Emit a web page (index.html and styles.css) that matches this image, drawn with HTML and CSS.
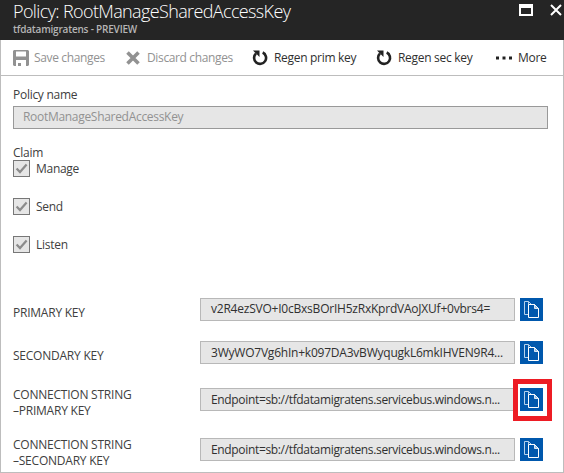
FILE: index.html
```html
<!DOCTYPE html>
<html lang="en">
<head>
<meta charset="utf-8">
<title>Policy: RootManageSharedAccessKey</title>
<link rel="stylesheet" href="styles.css">
</head>
<body>
<svg class="defs" width="0" height="0">
  <symbol id="check" viewBox="0 0 15 15"><path d="M2.6 7.4 6 11 12.6 3.6" fill="none" stroke="#8c8c8c" stroke-width="2.2"/></symbol>
  <symbol id="reload" viewBox="0 0 16 16"><path d="M4 3.5A6 6 0 1 0 10.7 2.5" fill="none" stroke="#222" stroke-width="2.6"/><path d="M1 .5h6.500V7L5.300 4.800 3.200 2.700Z" fill="#222"/></symbol>
  <symbol id="copy" viewBox="0 0 23 23"><path d="M4.500 3.500h4l3 3v10h-7z" fill="#0058ad" stroke="#b5d2ec"/><path d="M8.500 3.500v3h3" fill="none" stroke="#b5d2ec"/><path d="M8.500 6.500h6l4 4v9h-10z" fill="#0058ad" stroke="#fff"/><path d="M14.500 6.500l4 4h-4z" fill="#9dc3e6" stroke="#fff" stroke-width=".8"/></symbol>
</svg>
<header class="header">
  <div>
    <h1 class="title">Policy: RootManageSharedAccessKey</h1>
    <p class="subtitle">tfdatamigratens - PREVIEW</p>
  </div>
  <div class="window-actions">
    <svg width="14" height="12"><path d="M0 0h14v12H0zM2 4v6h10V4z" fill="#fff" fill-rule="evenodd"/></svg>
    <svg width="12" height="12"><path d="M1 1l10 10M11 1 1 11" stroke="#fff" stroke-width="2"/></svg>
  </div>
</header>
<main class="panel">
  <nav class="toolbar">
    <button class="tool save" disabled><svg width="16" height="16"><path d="M1 0h14l1 1v14l-1 1H1l-1-1V1zM3 1.500v5h10v-5zM3 10v6h2v-3h3v3h5v-6z" fill="#929292" fill-rule="evenodd"/></svg><span>Save changes</span></button>
    <button class="tool discard" disabled><svg width="14" height="14"><path d="M1.500 1.500l11 11M12.500 1.500l-11 11" stroke="#929292" stroke-width="3.600"/></svg><span>Discard changes</span></button>
    <button class="tool prim"><svg width="16" height="16"><use href="#reload"/></svg><span>Regen prim key</span></button>
    <button class="tool sec"><svg width="16" height="16"><use href="#reload"/></svg><span>Regen sec key</span></button>
    <button class="tool more"><svg width="17" height="4"><path d="M0 .5h3v3H0zM6.500.5h3v3h-3zM13 .5h3v3h-3z" fill="#222"/></svg><span>More</span></button>
  </nav>
  <section class="policy">
    <div class="policy-label">Policy name</div>
    <div class="policy-input">RootManageSharedAccessKey</div>
    <div class="claim-label">Claim</div>
    <div class="claims">
      <div class="claim"><span class="box"><svg width="15" height="15"><use href="#check"/></svg></span><span>Manage</span></div>
      <div class="claim"><span class="box"><svg width="15" height="15"><use href="#check"/></svg></span><span>Send</span></div>
      <div class="claim"><span class="box"><svg width="15" height="15"><use href="#check"/></svg></span><span>Listen</span></div>
    </div>
  </section>
  <section class="keys">
    <div class="row primary"><div class="key-label">PRIMARY KEY</div><div class="value">v2R4ezSVO+I0cBxsBOrIH5zRxKprdVAoJXUf+0vbrs4=</div><button class="copy"><svg width="23" height="23"><use href="#copy"/></svg></button></div>
    <div class="row secondary"><div class="key-label">SECONDARY KEY</div><div class="value">3WyWO7Vg6hIn+k097DA3vBWyqugkL6mkIHVEN9R4...</div><button class="copy"><svg width="23" height="23"><use href="#copy"/></svg></button></div>
    <div class="row conn-primary"><div class="key-label">CONNECTION STRING<br>–PRIMARY KEY</div><div class="value endpoint">Endpoint=sb://tfdatamigratens.servicebus.windows.n...</div><button class="copy highlighted"><svg width="23" height="23"><use href="#copy"/></svg></button></div>
    <div class="row conn-secondary"><div class="key-label">CONNECTION STRING<br>–SECONDARY KEY</div><div class="value endpoint">Endpoint=sb://tfdatamigratens.servicebus.windows.n...</div><button class="copy"><svg width="23" height="23"><use href="#copy"/></svg></button></div>
  </section>
</main>
</body>
</html>
```
FILE: styles.css
```css
*, *::after { box-sizing: border-box; }
body { margin: 0; width: 564px; height: 473px; overflow: hidden; background: #fff; color: #404040; font: 12px/16px "Open Sans", "Noto Sans", sans-serif; }
svg { display: block; flex: none; }
.defs { display: none; }
.header { height: 40px; padding: 0 2px 0 13px; background: #252525; display: flex; justify-content: space-between; color: #fff; }
.title { margin: 0; height: 22px; font-size: 18px; line-height: 22px; font-weight: 300; white-space: nowrap; letter-spacing: -.63px; }
.subtitle { margin: 0; font-size: 10px; line-height: 14px; font-weight: 600; color: #b5b5b5; letter-spacing: -.2px; }
.window-actions { display: flex; gap: 17px; padding-top: 4px; }
.panel { height: 433px; border: 1px solid #bdbdbd; border-top: 0; }
.toolbar { height: 36px; border-bottom: 1px solid #bdbdbd; display: flex; align-items: center; padding-left: 12px; }
.tool { display: flex; align-items: center; flex: none; gap: 5px; padding: 0; border: 0; background: none; font: inherit; color: #303030; white-space: nowrap; letter-spacing: -.3px; }
.tool:disabled { color: #929292; letter-spacing: -.36px; }
.save { width: 113px; }
.discard { width: 126px; gap: 7px; }
.prim { width: 124px; gap: 6px; }
.sec { width: 120px; gap: 6px; }
.policy { padding: 11px 15px 0 12px; letter-spacing: -.28px; }
.policy-label { height: 19px; }
.policy-input { height: 23px; border: 1px solid #999; background: #e6e6e6; color: #929292; padding: 1px 9px; line-height: 18px; letter-spacing: -.3px; }
.claim-label { margin-top: 16px; height: 15px; line-height: 15px; }
.claims { display: flex; flex-direction: column; gap: 21px; }
.claim { display: flex; height: 17px; line-height: 17px; gap: 6px; }
.box { width: 17px; height: 17px; border: 1px solid #777; background: #e6e6e6; }
.keys { padding: 45px 0 0 12px; }
.row { display: flex; align-items: flex-start; }
.primary { height: 43px; }
.secondary { height: 47px; }
.conn-primary { height: 50px; }
.conn-secondary { height: 34px; }
.key-label { width: 187px; padding-top: 7px; flex: none; letter-spacing: -.23px; white-space: nowrap; }
.conn-primary .key-label, .conn-secondary .key-label { padding-top: 0; margin-top: -1px; }
.value { width: 315px; height: 23px; flex: none; border: 1px solid #b8b8b8; background: #e6e6e6; color: #303030; padding-left: 10px; line-height: 20px; white-space: nowrap; letter-spacing: -.22px; }
.endpoint { letter-spacing: -.34px; line-height: 21px; }
.secondary .value { line-height: 21px; }
.copy { margin: 0 0 0 5px; width: 23px; height: 23px; flex: none; border: 0; padding: 0; background: #0058ad; position: relative; }
.highlighted::after { content: ""; position: absolute; left: -7px; top: -9px; width: 39px; height: 42px; border: 5px solid #ed1c24; }
```
